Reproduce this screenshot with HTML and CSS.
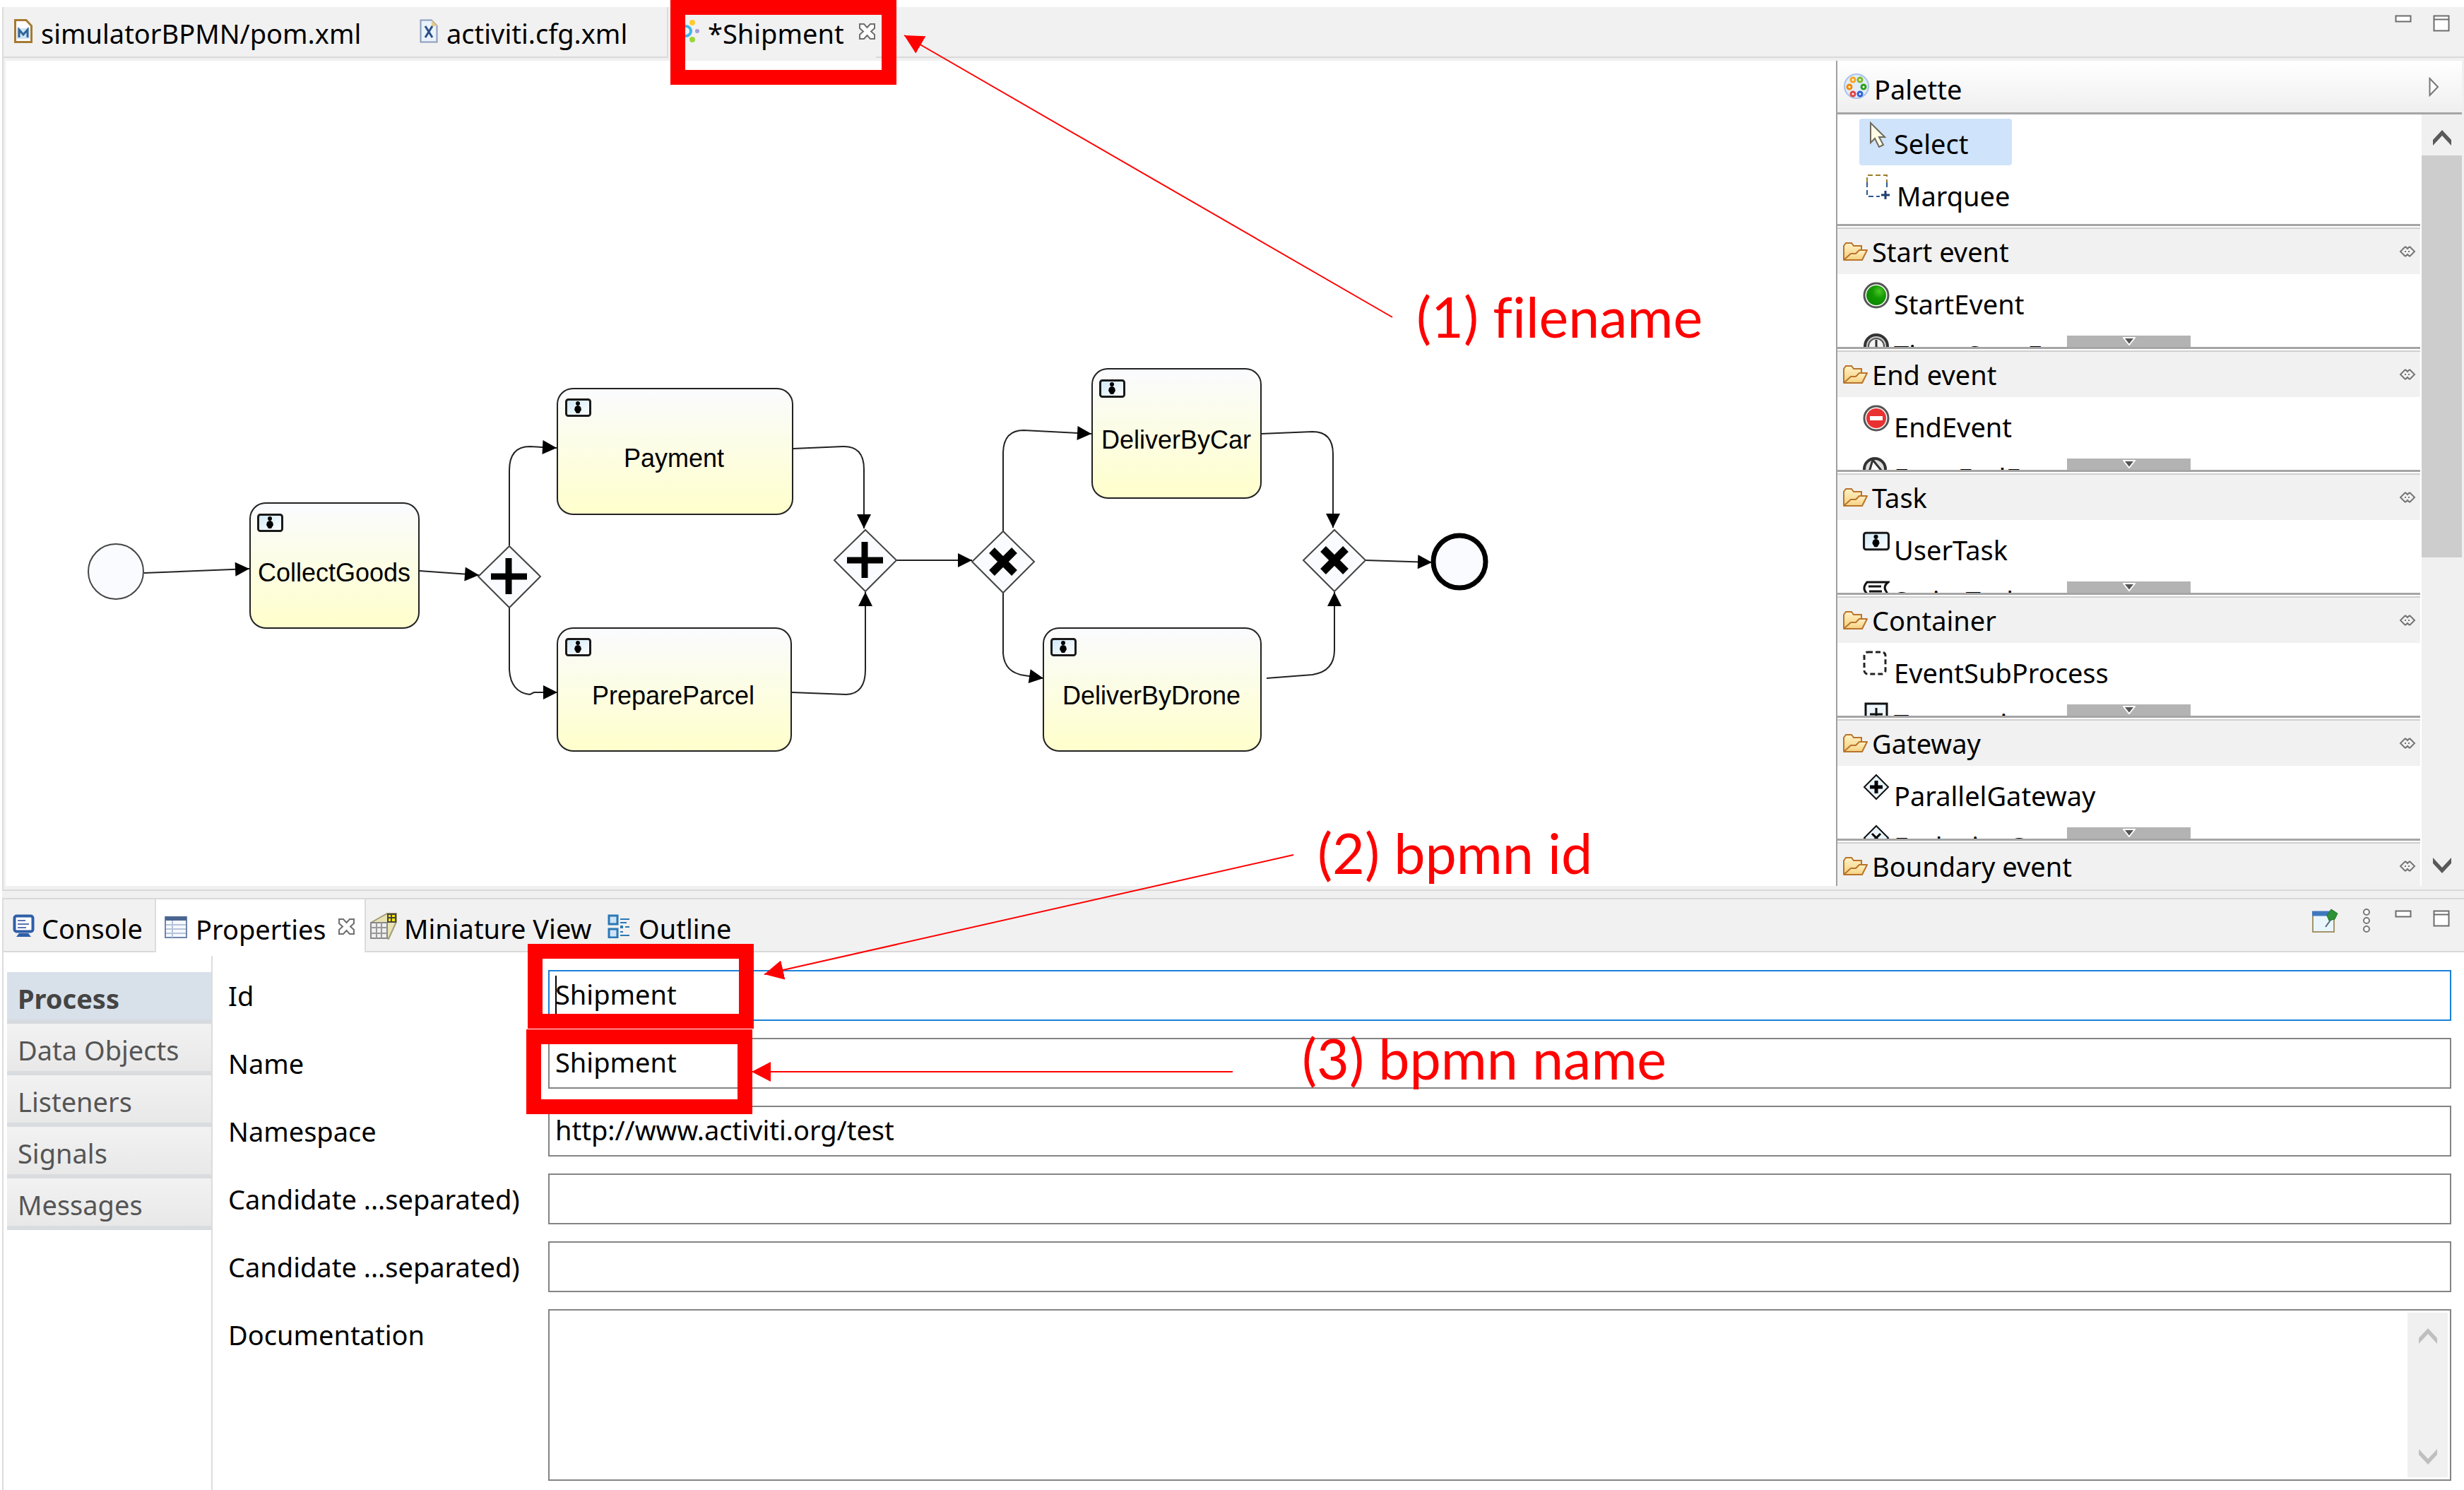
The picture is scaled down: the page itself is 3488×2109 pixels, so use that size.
FILE: index.html
```html
<!DOCTYPE html>
<html lang="en">
<head>
<meta charset="utf-8">
<title>Shipment</title>
<link rel="stylesheet" href="styles.css">
</head>
<body>
<svg class="sprites" aria-hidden="true">
  <defs>
    <linearGradient id="taskFill" x1="0" y1="0" x2="0" y2="1"><stop offset="0" stop-color="#fafbfe"/><stop offset="0.45" stop-color="#fcfde6"/><stop offset="1" stop-color="#ffffcc"/></linearGradient>
    <linearGradient id="blueFill" x1="0" y1="0" x2="1" y2="1"><stop offset="0" stop-color="#cfe8f7"/><stop offset="1" stop-color="#ffffff"/></linearGradient>
    <linearGradient id="folderFill" x1="0" y1="0" x2="0" y2="1"><stop offset="0" stop-color="#fff3c8"/><stop offset="1" stop-color="#f5cf7c"/></linearGradient>
    <radialGradient id="greenFill" cx="0.65" cy="0.3" r="0.7"><stop offset="0" stop-color="#4cc52a"/><stop offset="0.5" stop-color="#139a00"/><stop offset="1" stop-color="#0d8a00"/></radialGradient>
    <marker id="flowHead" markerUnits="userSpaceOnUse" markerWidth="22" markerHeight="20" refX="21" refY="10" orient="auto"><path d="M1 0 21 10 1 20Z"/></marker>
    <marker id="noteHead" markerUnits="userSpaceOnUse" markerWidth="28" markerHeight="28" refX="27" refY="14" orient="auto"><path d="M0 0 27 14 0 28Z" fill="#f00"/></marker>
  </defs>
  <symbol id="i-close" viewBox="0 0 25 25"><path d="M2 2h6l4.500 5 4.500-5h6v6l-5 4.500 5 4.500v6h-6l-4.500-5-4.500 5h-6v-6l5-4.500-5-4.500z" fill="#fff" stroke="#6f6f6f" stroke-width="2"/></symbol>
  <symbol id="i-folder" viewBox="0 0 36 28"><path d="M2 25V6l3-4h8l3 4h11v6" fill="url(#folderFill)" stroke="#b9742b" stroke-width="2"/><path d="M2 26 12 17h7l5-5h11l-7 14z" fill="url(#folderFill)" stroke="#b9742b" stroke-width="2" stroke-linejoin="round"/></symbol>
  <symbol id="i-pin" viewBox="0 0 24 18"><path d="M9 2 2 9l7 7M15 2l7 7-7 7M9 2l3 3 3-3M9 16l3-3 3 3M9 8v2M14 8v2" fill="none" stroke="#777" stroke-width="2"/></symbol>
  <symbol id="i-user" viewBox="0 0 37 26"><rect x="1.500" y="1.500" width="34" height="23" rx="3" fill="url(#blueFill)" stroke="#1a1a1a" stroke-width="3"/><circle cx="18" cy="7" r="3"/><path d="M14 12q4-4 8 0l1 4-3 5h-4l-3-5z"/></symbol>
  <symbol id="i-min" viewBox="0 0 24 12"><rect x="1.500" y="1.500" width="21" height="8" fill="#fff" stroke="#6d6d6d" stroke-width="2"/></symbol>
  <symbol id="i-max" viewBox="0 0 24 24"><rect x="1.500" y="1.500" width="21" height="21" fill="#fff" stroke="#6d6d6d" stroke-width="2"/><path d="M2 6.500h20" stroke="#6d6d6d" stroke-width="2"/></symbol>
  <symbol id="i-up" viewBox="0 0 28 24"><path d="M1 23V15L14 1l13 14v8L14 9z"/></symbol>
</svg>

<main class="workbench">
  <section class="editor">
    <header class="tabbar">
      <nav class="tabs">
        <button class="tab tab-pom"><svg class="ic-file" viewBox="0 0 26 34"><path d="M1.500 1.500H17l7.500 8v23h-23z" fill="#fff" stroke="#a57a33" stroke-width="3"/><rect x="4" y="13" width="18" height="15" fill="#cfe4f4"/><path d="M7 26V15l6 7 6-7v11" fill="none" stroke="#2f6699" stroke-width="3"/></svg>simulatorBPMN/pom.xml</button>
        <button class="tab tab-cfg"><svg class="ic-file" viewBox="0 0 26 34"><path d="M1.500 1.500H17l7.500 8v23h-23z" fill="#eaf2fb" stroke="#8a9cbb" stroke-width="2"/><path d="M17 1v9h8z" fill="#e5c98c"/><path d="M8 10l10 16M18 10 8 26" stroke="#2d4f86" stroke-width="3"/></svg>activiti.cfg.xml</button>
        <button class="tab tab-ship"><svg class="ic-act" viewBox="0 0 34 34"><circle cx="15" cy="17" r="7" fill="none" stroke="#3fb4ea" stroke-width="4"/><circle cx="24" cy="5" r="4" fill="#ffcb2e"/><circle cx="31" cy="17" r="3" fill="#a79be0"/><circle cx="24" cy="29" r="4" fill="#9bd53a"/></svg>*Shipment<svg class="ic-close"><use href="#i-close"/></svg></button>
      </nav>
      <div class="tools">
        <button aria-label="Minimize"><svg class="ic-min"><use href="#i-min"/></svg></button>
        <button aria-label="Maximize"><svg class="ic-max"><use href="#i-max"/></svg></button>
      </div>
    </header>
    <div class="editor-body">
      <div class="canvas">
        <svg class="diagram" viewBox="0 0 2590 1168" role="img" aria-label="Shipment process">
          <g transform="translate(-8 -86)">
            <g class="flow">
              <path d="M204 811 353 805"/>
              <path d="M594 808 678 814"/>
              <path d="M721 772V666Q721 632 750 632L788 634"/>
              <path d="M721 860V948Q723 980 750 983L756 980H789"/>
              <path d="M1123 635 1193 632Q1223 631 1223 664V748"/>
              <path d="M1121 980 1198 983Q1225 982 1225 948V838"/>
              <path d="M1269 793H1376"/>
              <path d="M1420 752V640Q1421 609 1449 609L1545 614"/>
              <path d="M1420 839V925Q1422 952 1450 956L1477 960"/>
              <path d="M1785 614 1858 611Q1887 611 1887 643V747"/>
              <path d="M1793 960 1858 955Q1889 950 1889 920V838"/>
              <path d="M1933 793 2027 796"/>
            </g>
            <circle class="node" cx="164" cy="809" r="39"/>
            <circle class="node end" cx="2066" cy="795" r="37"/>
            <g class="node">
              <path d="M721 773l44 43-44 44-44-44z"/><path d="M1225 750l44 43-44 44-44-44z"/>
              <path d="M1420 752l44 43-44 44-44-44z"/><path d="M1889 750l44 43-44 44-44-44z"/>
            </g>
            <path class="sign" d="M695 816h51M720 790v51M1199 793h51M1224 767v51"/>
            <path class="sign cross" d="M1404 779l32 32M1436 779l-32 32M1873 777l32 32M1905 777l-32 32"/>
            <g class="task">
              <rect x="354" y="712" width="239" height="177" rx="22"/>
              <rect x="789" y="550" width="333" height="178" rx="22"/>
              <rect x="789" y="889" width="331" height="174" rx="22"/>
              <rect x="1546" y="522" width="239" height="183" rx="22"/>
              <rect x="1477" y="889" width="308" height="174" rx="22"/>
            </g>
            <use href="#i-user" x="364" y="727" width="37" height="26"/>
            <use href="#i-user" x="800" y="564" width="37" height="26"/>
            <use href="#i-user" x="800" y="903" width="37" height="26"/>
            <use href="#i-user" x="1556" y="537" width="37" height="26"/>
            <use href="#i-user" x="1487" y="903" width="37" height="26"/>
            <g class="task-name">
              <text x="473" y="823">CollectGoods</text>
              <text x="954" y="661">Payment</text>
              <text x="953" y="997">PrepareParcel</text>
              <text x="1665" y="635">DeliverByCar</text>
              <text x="1630" y="997">DeliverByDrone</text>
            </g>
          </g>
        </svg>
      </div>
      <aside class="palette">
        <header class="palette-head">
          <svg class="ic-palette" viewBox="0 0 36 37"><ellipse cx="18" cy="18" rx="17" ry="17" fill="#e3ecfa" stroke="#a9c3e8" stroke-width="2"/><g fill="#fff" stroke-width="3"><circle cx="13" cy="9" r="3" stroke="#f5a623"/><circle cx="23" cy="9" r="3" stroke="#7dbb2b"/><circle cx="8" cy="19" r="3" stroke="#f08a00"/><circle cx="28" cy="19" r="3" stroke="#2c9e1c"/><circle cx="13" cy="29" r="3" stroke="#e04545"/><circle cx="23" cy="29" r="3" stroke="#2c62d8"/></g></svg>
          <h2>Palette</h2>
          <button aria-label="Collapse palette"><svg class="ic-tri" viewBox="0 0 15 28"><path d="M1.500 2v24L13 14z" fill="#fff" stroke="#777" stroke-width="2"/></svg></button>
        </header>
        <div class="palette-body">
          <div class="drawers">
            <div class="palette-tools">
              <button class="entry picked"><svg class="ic-arrow" viewBox="0 0 24 38"><path d="M2 2v28l6-6 6 12 6-3-6-11h8z" fill="#fffbe6" stroke="#6f6a5c" stroke-width="2"/></svg>Select</button>
              <button class="entry marquee"><svg class="ic-marq" viewBox="0 0 34 36"><path d="M2 12V2h28v10" fill="none" stroke="#9a7d2c" stroke-width="2" stroke-dasharray="7 4"/><path d="M2 12v20h18M30 12v10" fill="none" stroke="#2a5b93" stroke-width="2" stroke-dasharray="7 4"/><path d="M22 30h12M28 24v12" stroke="#1f3e72" stroke-width="3"/></svg>Marquee</button>
            </div>
            <section class="drawer">
              <h3><svg class="ic-folder"><use href="#i-folder"/></svg>Start event<svg class="ic-pin"><use href="#i-pin"/></svg></h3>
              <div class="entries">
                <button class="entry"><svg class="ic-entry" viewBox="0 0 38 38"><circle cx="19" cy="19" r="17" fill="#fff" stroke="#555" stroke-width="3"/><circle cx="19" cy="19" r="14" fill="url(#greenFill)"/></svg>StartEvent</button>
                <button class="entry"><svg class="ic-entry" viewBox="0 0 38 38"><circle cx="19" cy="19" r="16" fill="#ccc" stroke="#333" stroke-width="4"/><circle cx="19" cy="19" r="11" fill="#f4f4f4" stroke="#555" stroke-width="2"/><path d="M19 10v10l5 4" fill="none" stroke="#333" stroke-width="3"/></svg>TimerStartEvent</button>
                <button class="more" aria-label="Scroll down"><svg class="ic-more" viewBox="0 0 18 12"><path d="M1 1h16L9 11z" fill="#555" stroke="#fff" stroke-width="2"/></svg></button>
              </div>
            </section>
            <section class="drawer">
              <h3><svg class="ic-folder"><use href="#i-folder"/></svg>End event<svg class="ic-pin"><use href="#i-pin"/></svg></h3>
              <div class="entries">
                <button class="entry"><svg class="ic-entry" viewBox="0 0 38 38"><circle cx="19" cy="19" r="17" fill="#fff" stroke="#555" stroke-width="3"/><circle cx="19" cy="19" r="14" fill="#e83232"/><path d="M10 19h18" stroke="#fff" stroke-width="6"/></svg>EndEvent</button>
                <button class="entry"><svg class="ic-entry" viewBox="0 0 38 38"><circle cx="17" cy="19" r="15" fill="#ddd" stroke="#333" stroke-width="4"/><path d="M8 26 14 6l18 22" fill="#fff" stroke="#333" stroke-width="3"/></svg>ErrorEndEvent</button>
                <button class="more" aria-label="Scroll down"><svg class="ic-more" viewBox="0 0 18 12"><path d="M1 1h16L9 11z" fill="#555" stroke="#fff" stroke-width="2"/></svg></button>
              </div>
            </section>
            <section class="drawer">
              <h3><svg class="ic-folder"><use href="#i-folder"/></svg>Task<svg class="ic-pin"><use href="#i-pin"/></svg></h3>
              <div class="entries">
                <button class="entry"><svg class="ic-entry"><use href="#i-user"/></svg>UserTask</button>
                <button class="entry"><svg class="ic-entry" viewBox="0 0 38 38"><path d="M6 5h30q-8 6-3 13t-3 14H2q7-7 2-13T6 5z" fill="#fff" stroke="#111" stroke-width="3"/><path d="M8 11h18M9 18h18" stroke="#111" stroke-width="3"/></svg>ScriptTask</button>
                <button class="more" aria-label="Scroll down"><svg class="ic-more" viewBox="0 0 18 12"><path d="M1 1h16L9 11z" fill="#555" stroke="#fff" stroke-width="2"/></svg></button>
              </div>
            </section>
            <section class="drawer">
              <h3><svg class="ic-folder"><use href="#i-folder"/></svg>Container<svg class="ic-pin"><use href="#i-pin"/></svg></h3>
              <div class="entries">
                <button class="entry"><svg class="ic-entry" viewBox="0 0 38 38"><rect x="2" y="2" width="30" height="31" rx="5" fill="#fff" stroke="#222" stroke-width="3" stroke-dasharray="7 4"/></svg>EventSubProcess</button>
                <button class="entry"><svg class="ic-entry" viewBox="0 0 38 38"><rect x="4" y="3" width="30" height="30" fill="#eef7fc" stroke="#111" stroke-width="3"/><path d="M19 9v18M10 18h18" stroke="#111" stroke-width="3"/></svg>Transaction</button>
                <button class="more" aria-label="Scroll down"><svg class="ic-more" viewBox="0 0 18 12"><path d="M1 1h16L9 11z" fill="#555" stroke="#fff" stroke-width="2"/></svg></button>
              </div>
            </section>
            <section class="drawer">
              <h3><svg class="ic-folder"><use href="#i-folder"/></svg>Gateway<svg class="ic-pin"><use href="#i-pin"/></svg></h3>
              <div class="entries">
                <button class="entry"><svg class="ic-entry" viewBox="0 0 38 38"><path d="M19 2l17 17-17 17L2 19z" fill="#e9f5fc" stroke="#111" stroke-width="2"/><path d="M19 10v18M10 19h18" stroke="#000" stroke-width="5"/></svg>ParallelGateway</button>
                <button class="entry"><svg class="ic-entry" viewBox="0 0 38 38"><path d="M19 2l17 17-17 17L2 19z" fill="#e9f5fc" stroke="#111" stroke-width="2"/><path d="M13 13l12 12M25 13 13 25" stroke="#000" stroke-width="3"/></svg>ExclusiveGateway</button>
                <button class="more" aria-label="Scroll down"><svg class="ic-more" viewBox="0 0 18 12"><path d="M1 1h16L9 11z" fill="#555" stroke="#fff" stroke-width="2"/></svg></button>
              </div>
            </section>
            <section class="drawer">
              <h3><svg class="ic-folder"><use href="#i-folder"/></svg>Boundary event<svg class="ic-pin"><use href="#i-pin"/></svg></h3>
            </section>
          </div>
          <div class="scrollbar">
            <button aria-label="Scroll up"><svg class="ic-chev"><use href="#i-up"/></svg></button>
            <div class="track"><div class="thumb"></div></div>
            <button aria-label="Scroll down"><svg class="ic-chev down"><use href="#i-up"/></svg></button>
          </div>
        </div>
      </aside>
    </div>
  </section>

  <section class="views">
    <header class="tabbar">
      <nav class="tabs">
        <button class="tab tab-console"><svg class="ic-view" viewBox="0 0 32 34"><rect x="2.500" y="2.500" width="26" height="22" rx="3" fill="#fff" stroke="#2f5fa8" stroke-width="4"/><path d="M7 9h11M7 14h16M7 19h12" stroke="#5b74b4" stroke-width="2"/><path d="M9 27h13l4 5H5z" fill="#2f5fa8"/></svg>Console</button>
        <button class="tab tab-props"><svg class="ic-view" viewBox="0 0 32 34"><rect x="1" y="3" width="30" height="29" fill="#f6f9ff" stroke="#6f86ab" stroke-width="2"/><path d="M1 5h30" stroke="#4a6590" stroke-width="6"/><path d="M11 8v24M2 14h28M2 20h28M2 26h28" stroke="#b7c3da" stroke-width="2"/></svg>Properties<svg class="ic-close"><use href="#i-close"/></svg></button>
        <button class="tab tab-mini"><svg class="ic-mini" viewBox="0 0 38 38"><path d="M1 14 24 1h13v12L26 37z" fill="#e9e2b4" stroke="#a29c79" stroke-width="2"/><rect x="1" y="14" width="23" height="22" fill="#eee" stroke="#888" stroke-width="2"/><path d="M1 21h23M1 29h23M9 14v22M16 14v22" stroke="#999" stroke-width="2"/><rect x="25" y="2" width="11" height="11" fill="#f8e800" stroke="#444" stroke-width="2"/><path d="M25 7h11M30 2v11" stroke="#444" stroke-width="2"/></svg>Miniature View</button>
        <button class="tab tab-outline"><svg class="ic-view" viewBox="0 0 32 34"><rect x="2" y="2" width="12" height="12" fill="#cfe4f6" stroke="#2a78b5" stroke-width="3"/><rect x="2" y="21" width="12" height="12" fill="#cfe4f6" stroke="#2a78b5" stroke-width="3"/><path d="M18 7h13M18 12h9M18 30h13M18 25h4M25 18h6" stroke="#2a78b5" stroke-width="2"/><rect x="18" y="16" width="4" height="4" fill="#2a78b5"/></svg>Outline</button>
      </nav>
      <div class="tools">
        <button class="tall" aria-label="Pin"><svg class="ic-newpin" viewBox="0 0 38 36"><rect x="2" y="6" width="30" height="28" fill="#eaf6fd" stroke="#a3946b" stroke-width="2"/><path d="M1 8h31" stroke="#3f79bd" stroke-width="7"/><path d="M20 27l8-11" stroke="#567" stroke-width="2"/><path d="M22 11l6-9 9 6-4 8-8 2z" fill="#2f9236" stroke="#1f7428"/></svg></button>
        <button class="tall" aria-label="Menu"><svg class="ic-dots" viewBox="0 0 14 36"><g fill="#fff" stroke="#777" stroke-width="2"><circle cx="7" cy="6" r="4"/><circle cx="7" cy="18" r="4"/><circle cx="7" cy="30" r="4"/></g></svg></button>
        <button aria-label="Minimize"><svg class="ic-min"><use href="#i-min"/></svg></button>
        <button aria-label="Maximize"><svg class="ic-max"><use href="#i-max"/></svg></button>
      </div>
    </header>
    <div class="props">
      <nav class="pages">
        <button class="page current">Process</button>
        <button class="page">Data Objects</button>
        <button class="page">Listeners</button>
        <button class="page">Signals</button>
        <button class="page">Messages</button>
      </nav>
      <form class="form">
        <label for="f-id">Id</label>
        <div class="field"><input id="f-id" class="focused" value="Shipment"><span class="caret"></span></div>
        <label for="f-name">Name</label>
        <div class="field"><input id="f-name" value="Shipment"></div>
        <label for="f-ns">Namespace</label>
        <div class="field"><input id="f-ns" value="http://www.activiti.org/test"></div>
        <label for="f-users">Candidate ...separated)</label>
        <div class="field"><input id="f-users"></div>
        <label for="f-groups">Candidate ...separated)</label>
        <div class="field"><input id="f-groups"></div>
        <label for="f-doc">Documentation</label>
        <div class="doc">
          <textarea id="f-doc"></textarea>
          <div class="scrollbar faint">
            <button type="button" aria-label="Scroll up"><svg class="ic-chev"><use href="#i-up"/></svg></button>
            <button type="button" aria-label="Scroll down"><svg class="ic-chev down"><use href="#i-up"/></svg></button>
          </div>
        </div>
      </form>
    </div>
  </section>

  <div class="notes">
    <div class="frame frame-file"></div>
    <div class="frame frame-id"></div>
    <div class="frame frame-name"></div>
    <svg class="note-lines" viewBox="0 0 2600 1700"><path d="M1971 449 1280 50"/><path d="M1831 1210 1082 1379"/><path d="M1745 1517H1064"/></svg>
    <p class="note note-file">(1) filename</p>
    <p class="note note-id">(2) bpmn id</p>
    <p class="note note-name">(3) bpmn name</p>
  </div>
</main>
</body>
</html>
```
FILE: styles.css
```css
* { box-sizing: border-box; }
html { background: #fff; }
body {
  margin: 0;
  font: 38px/54px "Noto Sans", "Open Sans", sans-serif;
  color: #000;
}
h2, h3, p { margin: 0; font: inherit; }
button {
  margin: 0; padding: 0; border: 0; background: none;
  font: inherit; color: inherit; text-align: left;
}
svg { display: block; flex: none; }
.sprites { position: absolute; width: 0; height: 0; }

.workbench {
  position: relative;
  display: flex; flex-direction: column;
  min-height: 100vh;
  padding: 10px 0 0 3px;
  overflow: hidden;
}

/* tab bars */
.tabbar {
  display: flex; justify-content: space-between;
  height: 72px;
  background: #f1f1f1;
  border-bottom: 2px solid #d9d9d9;
}
.tabs { display: flex; }
.tab { display: flex; align-items: center; padding-top: 4px; white-space: nowrap; }
.tab svg { margin-bottom: 6px; }
.tools { display: flex; align-items: flex-start; padding: 11px 20px 0 0; gap: 30px; }

.ic-file { width: 26px; height: 34px; }
.ic-act { width: 34px; height: 34px; }
.ic-close { width: 25px; height: 25px; }
.ic-view { width: 32px; height: 34px; }
.ic-mini { width: 38px; height: 38px; }
.ic-min { width: 24px; height: 12px; }
.ic-max { width: 24px; height: 24px; }
.ic-newpin { width: 38px; height: 36px; }
.ic-dots { width: 14px; height: 36px; }

/* editor */
.editor { border-left: 2px solid #dcdcdc; border-bottom: 2px solid #d9d9d9; background: #f0f0f0; }
.editor .tab { gap: 12px; }
.tab-pom { width: 574px; padding-left: 15px; }
.tab-cfg { width: 367px; padding-left: 15px; border-right: 2px solid #dcdcdc; }
.editor .tab-ship { padding-left: 10px; padding-bottom: 2px; margin-bottom: -2px; background: #f1f1f1; }
.tab-ship .ic-close { margin-left: 8px; }
.editor-body { display: flex; padding: 4px 3px 5px; }
.canvas { flex: 1; min-width: 0; background: #fff; overflow: hidden; }
.diagram { width: 2590px; height: 1168px; }

.flow path { fill: none; stroke: #222; stroke-width: 2; marker-end: url(#flowHead); }
.node { fill: #fafbfe; stroke: #444; stroke-width: 2; }
.end { stroke: #000; stroke-width: 7; }
.sign { stroke: #000; stroke-width: 9; }
.cross { stroke-width: 11; }
.task rect { fill: url(#taskFill); stroke: #222; stroke-width: 2; }
.task-name { font: 36px "Liberation Sans", Arial, sans-serif; text-anchor: middle; }

/* palette */
.palette { display: flex; flex-direction: column; width: 886px; border-left: 2px solid #a0a0a0; background: #fff; }
.palette-head {
  display: flex; align-items: center; gap: 7px;
  height: 76px; padding: 0 32px 0 9px;
  background: linear-gradient(#fff, #efefef);
  border-bottom: 3px solid #a5a5a5;
}
.palette-head h2 { flex: 1; padding-top: 6px; }
.ic-palette { width: 36px; height: 37px; }
.ic-tri { width: 15px; height: 28px; }
.palette-body { flex: 1; display: flex; }
.drawers { flex: 1; min-width: 0; padding-right: 2px; }
.palette-tools { height: 155px; padding: 6px 0 0 31px; }
.entry { display: flex; align-items: flex-start; gap: 6px; height: 72px; padding: 15px 0 0 36px; line-height: 54px; white-space: nowrap; }
.entry svg { margin-top: -4px; }
.palette-tools .entry { padding: 8px 0 0 14px; }
.palette-tools .picked { width: 216px; height: 66px; gap: 11px; border-radius: 4px; background: #cfe3fa; }
.palette-tools .marquee { padding: 16px 0 0 9px; gap: 10px; }
.ic-arrow { width: 24px; height: 38px; }
.ic-marq { width: 34px; height: 36px; }
.ic-entry { width: 38px; height: 38px; }
.ic-folder { width: 36px; height: 28px; }
.ic-pin { width: 24px; height: 18px; margin-left: auto; }
.ic-more { width: 18px; height: 12px; }
.drawer { border-top: 3px solid #a5a5a5; padding-top: 2px; }
.drawer h3 {
  display: flex; align-items: center; gap: 6px;
  height: 66px; padding: 0 6px 0 7px;
  border-top: 2px solid #cfcfcf;
  background: #f1f1f1;
}
.drawer:last-child h3 { height: 62px; padding-top: 4px; }
.entries { position: relative; height: 103px; overflow: hidden; }
.more {
  position: absolute; left: 325px; bottom: 0;
  display: flex; justify-content: center; align-items: center;
  width: 175px; height: 16px; background: #b3b3b3;
}
.scrollbar { display: flex; flex-direction: column; width: 57px; background: #f0f0f0; }
.scrollbar button { display: flex; align-items: center; justify-content: center; height: 58px; }
.track { flex: 1; }
.thumb { height: 569px; background: #cdcdcd; }
.ic-chev { width: 28px; height: 24px; fill: #5a5a5a; margin-top: 8px; }
.down { transform: rotate(180deg); margin: 0; }

/* views */
.views { flex: 1; display: flex; flex-direction: column; margin-top: 10px; border-left: 2px solid #dcdcdc; box-shadow: 0 -10px 0 #f0f0f0; }
.views .tabbar { height: 77px; border-top: 2px solid #d9d9d9; }
.views .tab { padding-top: 8px; }
.views .tools { padding-top: 15px; }
.views .tall { margin: -3px 3px 0 0; }
.tab-console { width: 214px; padding-left: 13px; gap: 9px; }
.tab-props { width: 299px; padding-left: 12px; gap: 12px; margin-bottom: -2px; background: #fff; border: solid #dcdcdc; border-width: 0 2px; }
.tab-mini { width: 339px; padding-left: 6px; gap: 10px; }
.tab-outline { padding-left: 3px; gap: 12px; }
.tab-props .ic-close { margin-left: 4px; }

.props { flex: 1; display: flex; padding: 5px 18px 0 5px; }
.pages { display: flex; flex-direction: column; width: 291px; padding-top: 23px; border-right: 2px solid #dcdcdc; }
.page {
  height: 73px; padding: 7px 0 0 15px; line-height: 54px;
  color: #555;
  background: linear-gradient(#f2f2f2, #e8e8e8);
  border-bottom: 6px solid #d9dcdf;
}
.page.current { font-weight: bold; color: #444; background: #d8e0ea; border-color: #d6dade; }
.form { flex: 1; display: grid; grid-template-columns: 453px 1fr; grid-auto-rows: min-content; row-gap: 24px; padding: 20px 0 0 22px; }
.form label { padding-top: 9px; }
.field { position: relative; height: 72px; }
.field input, .doc { width: 100%; border: 2px solid #848484; background: #fff; }
.field input { display: block; height: 72px; padding: 0 8px 4px; font: inherit; color: inherit; outline: 0; }
.field .focused { border-color: #1a80d8; }
.caret { position: absolute; left: 10px; top: 8px; width: 2px; height: 56px; background: #000; }
.doc { display: flex; height: 243px; padding: 3px; }
.doc textarea { flex: 1; border: 0; padding: 8px; resize: none; font: inherit; outline: 0; }
.faint { justify-content: space-between; }
.faint .ic-chev { fill: #bfbfbf; }

/* annotations drawn over the workbench */
.notes { position: absolute; inset: 0; pointer-events: none; }
.frame { position: absolute; width: 320px; height: 120px; border: 21px solid #f00; }
.frame-file { left: 949px; top: 0; }
.frame-id { left: 747px; top: 1336px; }
.frame-name { left: 745px; top: 1457px; }
.note-lines { position: absolute; left: 0; top: 0; width: 2600px; height: 1700px; }
.note-lines path { fill: none; stroke: #f00; stroke-width: 2; marker-end: url(#noteHead); }
.note { position: absolute; font: 79px/96px Lato, Carlito, sans-serif; font-variant-ligatures: none; color: #f00; white-space: nowrap; }
.note-file { left: 2005px; top: 400px; }
.note-id { left: 1865px; top: 1159px; }
.note-name { left: 1843px; top: 1450px; }
```
